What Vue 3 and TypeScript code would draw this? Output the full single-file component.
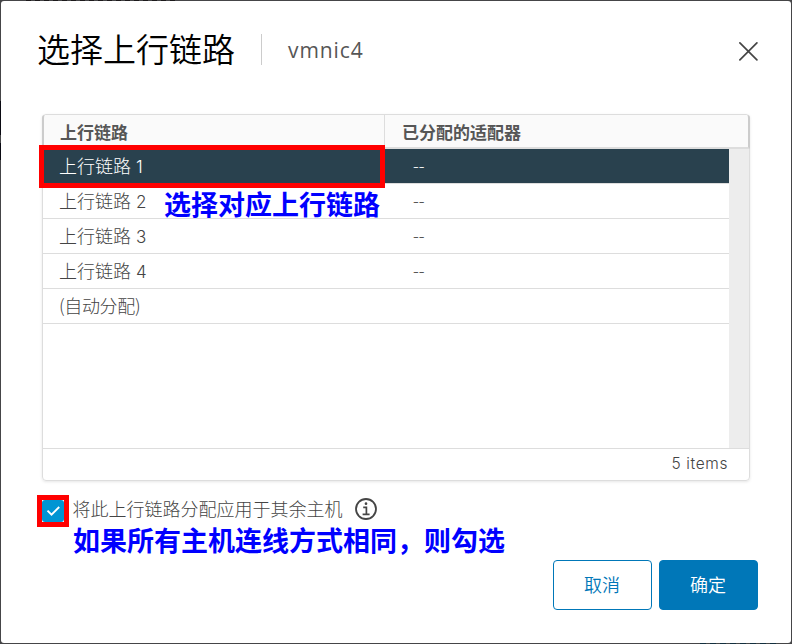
<script setup lang="ts">
import { ref } from 'vue'

interface Uplink {
  name: string
  index?: string
  adapter: string
}

const uplinks: Uplink[] = [
  { name: '上行链路', index: '1', adapter: '--' },
  { name: '上行链路', index: '2', adapter: '--' },
  { name: '上行链路', index: '3', adapter: '--' },
  { name: '上行链路', index: '4', adapter: '--' },
  { name: '(自动分配)', adapter: '' },
]
const selected = ref(0)
const applyToAll = ref(true)
</script>

<template>
  <div class="backdrop">
    <section class="dialog" role="dialog">
      <header class="head">
        <h1 class="title">选择上行链路</h1>
        <span class="subtitle">vmnic4</span>
        <button class="close" aria-label="close">
          <svg width="20" height="20" viewBox="0 0 20 20">
            <path d="M1.9 1.9 18.9 18.9M18.9 1.9 1.9 18.9" fill="none" stroke="#454545" stroke-width="1.7" stroke-linecap="round" />
          </svg>
        </button>
      </header>

      <div class="grid">
        <div class="grid-head">
          <div class="th first">上行链路</div>
          <div class="th second">已分配的适配器</div>
        </div>
        <div class="grid-body">
          <div class="rows">
            <div
              v-for="(row, i) in uplinks"
              :key="i"
              class="row"
              :class="{ selected: i === selected }"
              @click="selected = i"
            >
              <div class="cell" :class="{ auto: !row.index }">{{ row.name }}<span v-if="row.index" class="num">{{ row.index }}</span></div>
              <div class="cell adapter">{{ row.adapter }}</div>
            </div>
          </div>
          <div class="gutter"></div>
        </div>
        <div class="grid-foot">5 items</div>
        <div class="mark mark-row"></div>
        <div class="note note-row">选择对应上行链路</div>
      </div>

      <div class="apply">
        <button class="check" role="checkbox" :aria-checked="applyToAll" @click="applyToAll = !applyToAll">
          <svg v-if="applyToAll" width="22" height="22" viewBox="0 0 22 22">
            <path d="M5.5 10.7 9.5 14.7 17.2 7" fill="none" stroke="#fff" stroke-width="1.9" />
          </svg>
        </button>
        <span class="apply-label">将此上行链路分配应用于其余主机</span>
        <svg class="info" width="22" height="22" viewBox="0 0 22 22">
          <circle cx="11" cy="11" r="10" fill="none" stroke="#454545" stroke-width="1.8" />
          <circle cx="11" cy="5.7" r="1.35" fill="#454545" />
          <path d="M8.2 9.4H11.4V16.2M7.6 16.3H14.6" fill="none" stroke="#454545" stroke-width="1.7" />
        </svg>
        <div class="mark mark-check"></div>
      </div>
      <div class="note note-check">如果所有主机连线方式相同，则勾选</div>

      <footer class="actions">
        <button class="btn">取消</button>
        <button class="btn primary">确定</button>
      </footer>
    </section>
  </div>
</template>

<style>
body {
  margin: 0;
  overflow: hidden;
}
</style>

<style scoped>
* {
  box-sizing: border-box;
}
.backdrop {
  width: 792px;
  height: 644px;
  padding: 1px;
  background:
    linear-gradient(#0a0a12, #0a0a12) 0 101px / 1px 34px no-repeat,
    linear-gradient(#0a0a12, #0a0a12) 0 143px / 1px 17px no-repeat,
    repeating-linear-gradient(90deg, #1d1a1c 0 5px, #454547 5px 9px) 26px 0 / 152px 1px no-repeat,
    repeating-linear-gradient(90deg, #14303f 0 6px, #454547 6px 10px) 700px 643px / 76px 1px no-repeat,
    #454547;
  font-family: Inter, "Noto Sans CJK SC", sans-serif;
  font-weight: 300;
  color: #565656;
}
.dialog {
  width: 790px;
  height: 642px;
  padding: 0 33px 0 41px;
  background: #fff;
  border-radius: 3px;
  display: flex;
  flex-direction: column;
}
.head {
  height: 113px;
  display: flex;
  align-items: flex-start;
  flex-shrink: 0;
}
.title {
  margin: 24px 0 0 -5px;
  width: 224px;
  font: 350 33px/46px "Noto Sans CJK SC", sans-serif;
  color: #000;
  white-space: nowrap;
}
.subtitle {
  margin-top: 33px;
  height: 31px;
  padding-left: 26px;
  border-left: 1px solid #ccc;
  font: 400 21px/33px "Open Sans", sans-serif;
  letter-spacing: 0.9px;
}
button {
  padding: 0;
  border: 0;
  background: none;
}
.close {
  width: 20px;
  height: 20px;
  margin: 40px 0 0 auto;
}
.close svg,
.check svg {
  display: block;
}
.grid {
  position: relative;
  width: 708px;
  height: 367px;
  flex-shrink: 0;
  display: flex;
  flex-direction: column;
  border: 1px solid #ddd;
  border-radius: 4px;
  box-shadow: 0 1px 3px rgba(0, 0, 0, 0.1);
}
.grid-head {
  height: 34px;
  display: flex;
  flex-shrink: 0;
  margin: 0 -1px;
  background: #fafafa;
  border-bottom: 2px solid #ddd;
  border-left: 2px solid #ccc;
  border-right: 2px solid #ccc;
  border-radius: 3px 3px 0 0;
}
.th {
  font: 700 17px/34px "Noto Sans CJK SC", sans-serif;
}
.first {
  width: 341px;
  padding-left: 16px;
  border-right: 1px solid #ddd;
}
.second {
  padding-left: 17px;
}
.grid-body {
  height: 299px;
  display: flex;
}
.rows {
  flex: 1;
}
.row {
  height: 35px;
  display: flex;
  border-bottom: 1px solid #ddd;
  color: #444;
}
.row.selected {
  background: #29414e;
  color: #fff;
}
.cell {
  width: 342px;
  padding-left: 16px;
  font: 300 18px/32px "Noto Sans CJK SC", sans-serif;
  white-space: pre;
}
.auto {
  letter-spacing: -0.35px;
}
.num {
  margin-left: 5px;
  font-family: Inter, sans-serif;
  font-size: 17px;
}
.adapter {
  padding-left: 28px;
  font-family: "Open Sans", sans-serif;
  line-height: 34px;
}
.gutter {
  width: 20px;
  background: #ededed;
}
.grid-foot {
  flex: 1;
  border-top: 1px solid #ddd;
  padding-right: 21px;
  text-align: right;
  font-size: 15.5px;
  line-height: 30px;
  letter-spacing: 0.6px;
  color: #444;
}
.mark {
  position: absolute;
  border: 5px solid #f00;
  pointer-events: none;
}
.mark-row {
  left: -4px;
  top: 30px;
  width: 346px;
  height: 43px;
}
.note {
  font: 700 27px/36px "Noto Sans CJK SC", sans-serif;
  color: #00f;
  white-space: nowrap;
}
.note-row {
  position: absolute;
  left: 121px;
  top: 71px;
}
.apply {
  position: relative;
  height: 41px;
  padding-top: 19px;
  display: flex;
  flex-shrink: 0;
  align-items: flex-start;
}
.check {
  width: 22px;
  height: 22px;
  background: #0095d3;
  border-radius: 3px;
}
.mark-check {
  left: -5px;
  top: 14px;
  width: 32px;
  height: 32px;
}
.apply-label {
  margin: -5px 12px 0 8.5px;
  font: 300 18px/26px "Noto Sans CJK SC", sans-serif;
  color: #444;
}
.info {
  margin-top: -2px;
}
.note-check {
  margin-left: 31px;
}
.actions {
  display: flex;
  justify-content: flex-end;
  gap: 7px;
  margin: auto 0 33px;
}
.btn {
  width: 99px;
  height: 50px;
  padding: 0 1px 2px 0;
  border: 1px solid #0077b8;
  border-radius: 4px;
  font: 350 18px/46px "Noto Sans CJK SC", sans-serif;
  color: #0077b8;
}
.primary {
  background: #0077b8;
  color: #fff;
}
</style>
